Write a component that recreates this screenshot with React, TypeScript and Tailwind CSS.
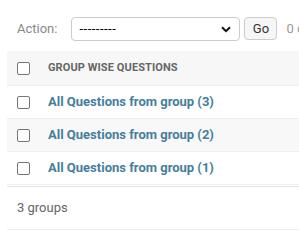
import React from "react";

const rows = [
  "All Questions from group (3)",
  "All Questions from group (2)",
  "All Questions from group (1)",
];

function Box() {
  return <span className="inline-block w-[13px] h-[13px] rounded-[2px] border border-[#767676] bg-white" />;
}

export default function App() {
  return (
    <div className="w-[299px] h-[252px] overflow-hidden bg-white pl-[7px] text-[13px] text-[#333]" style={{ fontFamily: "Roboto, 'Liberation Sans', sans-serif" }}>
      <div className="w-[420px]">
        <div className="flex items-center h-[51px] pl-[10px] pt-[6px] whitespace-nowrap">
          <span className="text-[#888] text-[13px] mr-[14px]">Action:</span>
          <div className="relative flex items-center w-[169px] h-[24px] border border-[#ccc] rounded-[4px] pl-[7px] text-[#000] text-[13px] tracking-[0.5px]">
            ---------
            <svg className="absolute right-[8px] top-[8px]" width="10" height="7" viewBox="0 0 10 7">
              <path d="M1 1.2 L5 5.2 L9 1.2" fill="none" stroke="#111" strokeWidth="2" />
            </svg>
          </div>
          <span className="ml-[4px] flex items-center justify-center w-[33px] h-[23px] border border-[#ccc] rounded-[4px] bg-[#f6f6f6] text-[#333] text-[13px]">Go</span>
          <span className="ml-[9px] text-[#999] text-[13px]">0 of 3 selected</span>
        </div>
        <div className="flex items-center h-[35px] bg-[#f7f7f7] border-b border-[#eee]">
          <div className="w-[41px] pl-[10px] flex items-center"><Box /></div>
          <span className="text-[11px] font-bold text-[#666] uppercase tracking-[0.1px]">Group wise questions</span>
        </div>
        {rows.map((r, i) => (
          <div key={r} className={"flex items-center h-[33px] border-b border-[#eee] " + (i === 1 ? "bg-[#f8f8f8]" : "bg-white")}>
            <div className="w-[41px] pl-[10px] flex items-center"><Box /></div>
            <span className="font-bold text-[#447e9b] text-[13px]">{r}</span>
          </div>
        ))}
        <div className="mt-[1px] border-t border-[#e4e4e4] h-[44px] flex items-center pl-[10px] border-b border-b-[#eee] text-[#666]">
          3 groups
        </div>
      </div>
    </div>
  );
}
